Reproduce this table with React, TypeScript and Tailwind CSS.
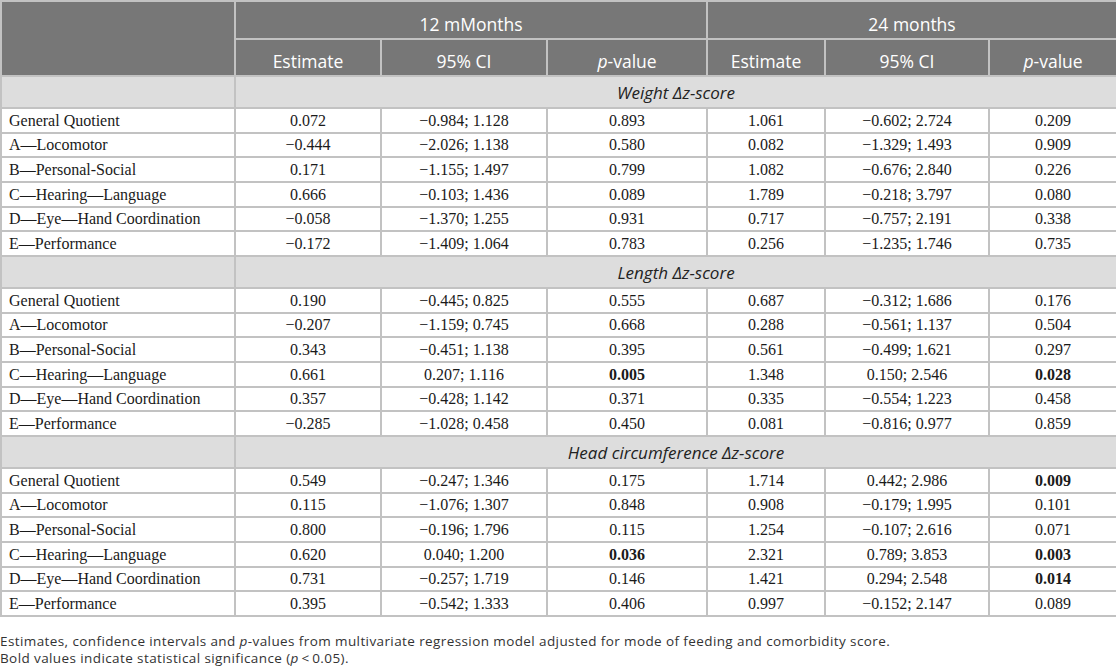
import React from "react";

type Row = [string, string, string, string, string, string, string];
type Section = { title: string; rows: Row[]; bold: [number, number][] };

const sections: Section[] = [
  {
    title: "Weight Δz-score",
    rows: [
      ["General Quotient", "0.072", "−0.984; 1.128", "0.893", "1.061", "−0.602; 2.724", "0.209"],
      ["A—Locomotor", "−0.444", "−2.026; 1.138", "0.580", "0.082", "−1.329; 1.493", "0.909"],
      ["B—Personal-Social", "0.171", "−1.155; 1.497", "0.799", "1.082", "−0.676; 2.840", "0.226"],
      ["C—Hearing—Language", "0.666", "−0.103; 1.436", "0.089", "1.789", "−0.218; 3.797", "0.080"],
      ["D—Eye—Hand Coordination", "−0.058", "−1.370; 1.255", "0.931", "0.717", "−0.757; 2.191", "0.338"],
      ["E—Performance", "−0.172", "−1.409; 1.064", "0.783", "0.256", "−1.235; 1.746", "0.735"],
    ],
    bold: [],
  },
  {
    title: "Length Δz-score",
    rows: [
      ["General Quotient", "0.190", "−0.445; 0.825", "0.555", "0.687", "−0.312; 1.686", "0.176"],
      ["A—Locomotor", "−0.207", "−1.159; 0.745", "0.668", "0.288", "−0.561; 1.137", "0.504"],
      ["B—Personal-Social", "0.343", "−0.451; 1.138", "0.395", "0.561", "−0.499; 1.621", "0.297"],
      ["C—Hearing—Language", "0.661", "0.207; 1.116", "0.005", "1.348", "0.150; 2.546", "0.028"],
      ["D—Eye—Hand Coordination", "0.357", "−0.428; 1.142", "0.371", "0.335", "−0.554; 1.223", "0.458"],
      ["E—Performance", "−0.285", "−1.028; 0.458", "0.450", "0.081", "−0.816; 0.977", "0.859"],
    ],
    bold: [[3, 3], [3, 6]],
  },
  {
    title: "Head circumference Δz-score",
    rows: [
      ["General Quotient", "0.549", "−0.247; 1.346", "0.175", "1.714", "0.442; 2.986", "0.009"],
      ["A—Locomotor", "0.115", "−1.076; 1.307", "0.848", "0.908", "−0.179; 1.995", "0.101"],
      ["B—Personal-Social", "0.800", "−0.196; 1.796", "0.115", "1.254", "−0.107; 2.616", "0.071"],
      ["C—Hearing—Language", "0.620", "0.040; 1.200", "0.036", "2.321", "0.789; 3.853", "0.003"],
      ["D—Eye—Hand Coordination", "0.731", "−0.257; 1.719", "0.146", "1.421", "0.294; 2.548", "0.014"],
      ["E—Performance", "0.395", "−0.542; 1.333", "0.406", "0.997", "−0.152; 2.147", "0.089"],
    ],
    bold: [[0, 6], [3, 3], [3, 6], [4, 6]],
  },
];

const rowHeights = ["h-[25px]", "h-[24px]", "h-[25px]", "h-[25px]", "h-[24px]", "h-[25px]"];

const sans = "font-['Open_Sans',_'Liberation_Sans',_sans-serif]";
const serif = "font-['Liberation_Serif',_serif]";

function PValue() {
  return (
    <>
      <span className="italic">p</span>-value
    </>
  );
}

const hcell = "border-2 border-[#c2c2c2] font-normal p-0 pt-[9px] leading-none";

export default function App() {
  return (
    <div className="w-[1116px] h-[666px] bg-white overflow-hidden">
      <table className="w-[1116px] table-fixed border-collapse">
        <colgroup>
          <col className="w-[234px]" />
          <col className="w-[146px]" />
          <col className="w-[166px]" />
          <col className="w-[160px]" />
          <col className="w-[118px]" />
          <col className="w-[164px]" />
          <col className="w-[128px]" />
        </colgroup>
        <thead className={`${sans} text-white text-[17.5px] font-normal`}>
          <tr className="h-[38px] bg-[#777777]">
            <th rowSpan={2} className="border-2 border-[#c2c2c2] p-0"></th>
            <th colSpan={3} className={hcell}>12 mMonths</th>
            <th colSpan={3} className={hcell}>24 months</th>
          </tr>
          <tr className="h-[37px] bg-[#777777]">
            <th className={hcell}>Estimate</th>
            <th className={hcell}>95% CI</th>
            <th className={hcell}><PValue /></th>
            <th className={hcell}>Estimate</th>
            <th className={hcell}>95% CI</th>
            <th className={hcell}><PValue /></th>
          </tr>
        </thead>
        <tbody>
          {sections.map((s) => (
            <React.Fragment key={s.title}>
              <tr className="h-[32px] bg-[#dddddd]">
                <td className="border-2 border-[#c2c2c2] p-0"></td>
                <td colSpan={6} className={`border-2 border-[#c2c2c2] p-0 leading-none text-center italic text-[17px] text-[#222] ${sans}`}>
                  {s.title}
                </td>
              </tr>
              {s.rows.map((r, ri) => (
                <tr key={r[0]} className={`${rowHeights[ri]} bg-white ${serif} text-[16px] text-[#1a1a1a]`}>
                  {r.map((c, ci) => {
                    const isBold = s.bold.some(([a, b]) => a === ri && b === ci);
                    return (
                      <td
                        key={ci}
                        className={`border-2 border-[#c2c2c2] py-0 leading-none ${ci === 0 ? "text-left pl-[7px]" : "text-center px-0"} ${isBold ? "font-bold" : ""}`}
                      >
                        {c}
                      </td>
                    );
                  })}
                </tr>
              ))}
            </React.Fragment>
          ))}
        </tbody>
      </table>
      <div className={`mt-[16px] ${sans} text-[13.5px] leading-[17px] text-[#333] tracking-[0.4px]`}>
        <p>
          Estimates, confidence intervals and <span className="italic">p</span>-values from multivariate regression model adjusted for mode of feeding and comorbidity score.
        </p>
        <p>
          Bold values indicate statistical significance (<span className="italic">p</span>&thinsp;&lt;&thinsp;0.05).
        </p>
      </div>
    </div>
  );
}
